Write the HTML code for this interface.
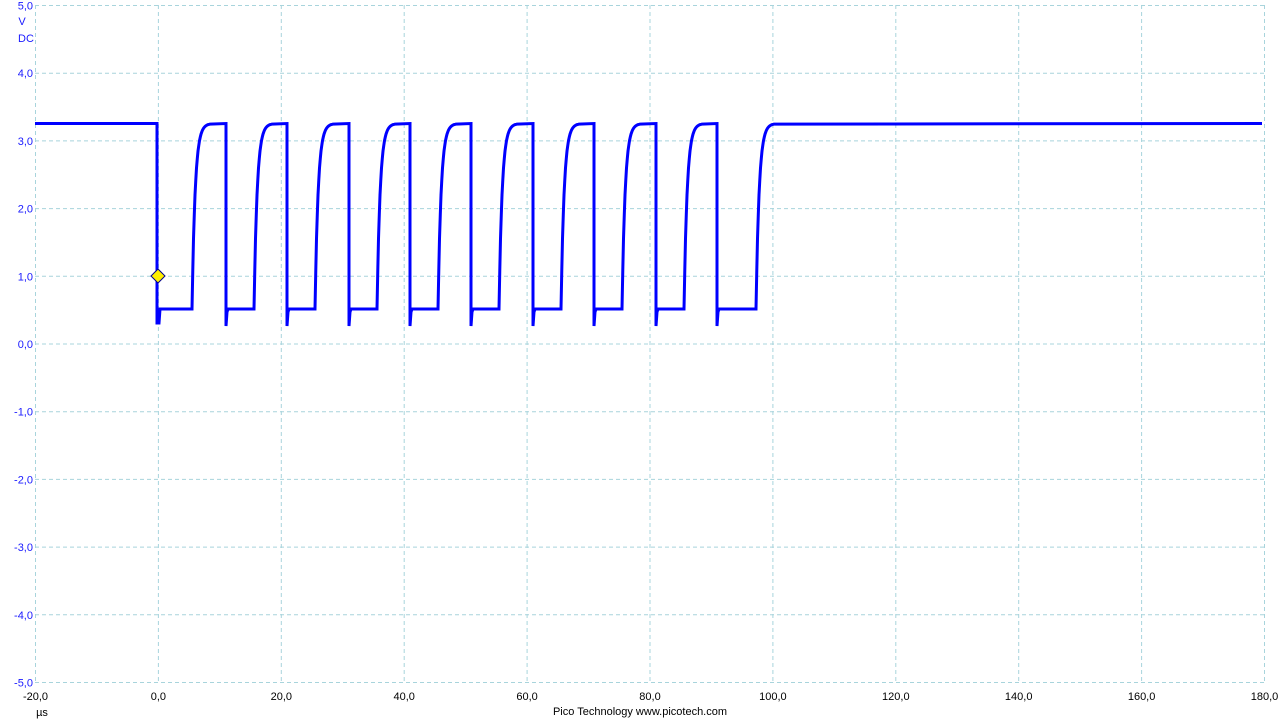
<!DOCTYPE html>
<html><head><meta charset="utf-8"><style>
html,body{margin:0;padding:0;background:#fff;width:1280px;height:720px;overflow:hidden}
svg{display:block}
text{font-family:"Liberation Sans",sans-serif;font-size:11px}
</style></head><body>
<svg id="s" width="1280" height="720" xmlns="http://www.w3.org/2000/svg">
<g id="grid" stroke="#a8d4dc" stroke-width="1" stroke-dasharray="4,3"></g>
<g id="yl" fill="#1a1aff" text-anchor="end"></g>
<g id="xl" fill="#000" text-anchor="middle"></g>
<text x="22" y="25" fill="#1a1aff" text-anchor="middle">V</text>
<text x="26" y="42" fill="#1a1aff" text-anchor="middle">DC</text>
<text x="42" y="716" fill="#000" text-anchor="middle">µs</text>
<text x="640" y="715" fill="#000" text-anchor="middle">Pico Technology  www.picotech.com</text>
<path id="w" fill="none" stroke="#0000ff" stroke-width="3" stroke-linejoin="miter"/>
<polygon points="158,269 165,276 158,283 151,276" fill="#ffee00" stroke="#00008b" stroke-width="1"/>
</svg>
<script>
var ns="http://www.w3.org/2000/svg";
function el(t,a,p,txt){var e=document.createElementNS(ns,t);for(var k in a)e.setAttribute(k,a[k]);if(txt)e.textContent=txt;document.getElementById(p).appendChild(e);}
var X0=35.5,DX=122.9,Y0=5.5,DY=67.7;
for(var i=0;i<=10;i++){var x=X0+i*DX;el('line',{x1:x,y1:5,x2:x,y2:682},'grid');
 var v=(-20+20*i).toFixed(1).replace('.',',');el('text',{x:x,y:700},'xl',v);}
for(var j=0;j<=10;j++){var y=Y0+j*DY;el('line',{x1:35,y1:y,x2:1264,y2:y},'grid');
 var v=(5-j).toFixed(1).replace('.',',');el('text',{x:33,y:y+4},'yl',v);}
var H=123.5,L=309,d="M35,"+H+" L157,"+H+" L157,323 L159,323 L160,"+L;
var falls=[157,226,287,349,410,471,533,594,656,717];
var rises=[192,254,315,377,438,499,561,622,684,756];
for(var k=0;k<10;k++){
 var r=rises[k];
 d+=" L"+r+","+L;
 for(var t=0;t<=24;t++){var y=L-(L-H)*(1-Math.exp(-t/4.2));d+=" L"+(r+t*0.75).toFixed(1)+","+y.toFixed(1);}
 if(k<9){var f=falls[k+1];d+=" L"+f+","+H+" L"+f+",326 L"+(f+1)+",312 L"+(f+2)+","+L;}
 else d+=" L1262,"+H;
}
document.getElementById('w').setAttribute('d',d);
</script>
</body></html>
